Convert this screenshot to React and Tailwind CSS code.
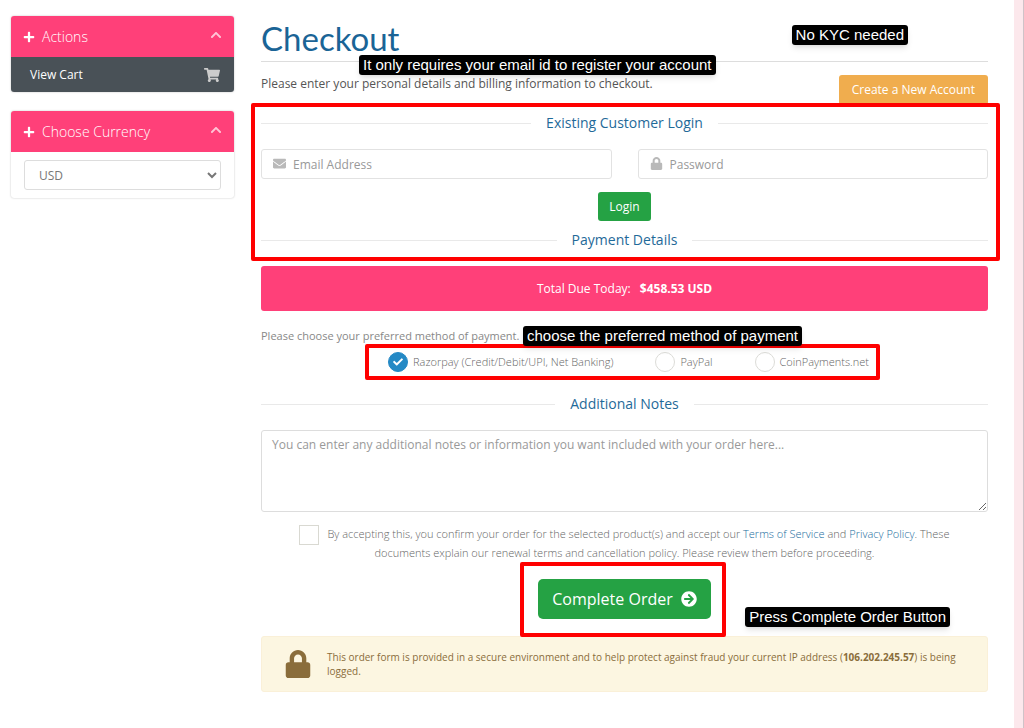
import React, { useState } from 'react';
import {
  FaArrowCircleRight,
  FaCheck,
  FaChevronUp,
  FaEnvelope,
  FaLock,
  FaPlus,
  FaShoppingCart
} from 'react-icons/fa';

const paymentMethods = [
  { id: 'razorpay', label: 'Razorpay (Credit/Debit/UPI, Net Banking)' },
  { id: 'paypal', label: 'PayPal' },
  { id: 'coinpayments', label: 'CoinPayments.net' }
];

function Callout({ className, children }) {
  return (
    <span className={`absolute z-20 whitespace-nowrap rounded-[3px] bg-black px-1 font-['Liberation_Sans',Arial,sans-serif] text-[15px] leading-5 text-white shadow-md ${className}`}>
      {children}
    </span>
  );
}

function Highlight({ className }) {
  return <div aria-hidden="true" className={`pointer-events-none absolute z-10 rounded-[2px] border-4 border-[#ff0000] ${className}`} />;
}

function SectionTitle({ children }) {
  return (
    <div className="flex items-center gap-[15px]">
      <div className="h-px flex-1 bg-[#e9e9e9]" />
      <h2 className="text-[14px] leading-5 text-[#1f6a99]">{children}</h2>
      <div className="h-px flex-1 bg-[#e9e9e9]" />
    </div>
  );
}

function SidebarPanel({ title, children }) {
  return (
    <section className="overflow-hidden rounded-[3px] shadow-[0_0_2px_rgba(0,0,0,0.25)]">
      <button type="button" className="flex h-[41px] w-full items-center bg-[#ff4079] px-3 text-[14px] font-light text-white">
        <FaPlus size={12} />
        <span className="ml-[7px]">{title}</span>
        <FaChevronUp size={12} className="mb-1 ml-auto text-[#ffc4d6]" />
      </button>
      {children}
    </section>
  );
}

function IconInput({ icon: Icon, label, type, id }) {
  return (
    <div className="relative">
      <label htmlFor={id} className="absolute left-3 top-2 text-[#b9b9b9]">
        <Icon size={13} />
      </label>
      <input
        id={id}
        type={type}
        aria-label={label}
        placeholder={label}
        className="block h-[30px] w-full rounded-[3px] border border-[#e2e2e2] pl-[31px] pr-3 text-[12px] outline-none placeholder:text-[#999999]"
      />
    </div>
  );
}

export default function App() {
  const [method, setMethod] = useState('razorpay');
  const [accepted, setAccepted] = useState(false);

  return (
    <div className="min-h-screen border-r border-[#cfc3c8] bg-[#fce8ec] pr-[9px] font-['Open_Sans','Noto_Sans',sans-serif] text-[12px] text-[#555555]">
      <div className="flex min-h-screen items-start gap-[27px] bg-white pb-9 pl-[11px] pr-[26px] pt-4">
        <aside className="flex w-[223px] shrink-0 flex-col gap-[19px]">
          <SidebarPanel title="Actions">
            <a href="#cart" className="flex h-[35px] items-center justify-between bg-[#495157] pl-[19px] pr-3.5 text-[12px] text-white">
              View Cart
              <FaShoppingCart size={16} className="text-[#cccccc]" />
            </a>
          </SidebarPanel>
          <SidebarPanel title="Choose Currency">
            <div className="px-[13px] py-2">
              <select
                aria-label="Choose Currency"
                defaultValue="USD"
                className="block h-[30px] w-full rounded-[3px] border border-[#dddddd] bg-white pl-2.5 text-[12px] text-[#777777]"
              >
                <option>USD</option>
              </select>
            </div>
          </SidebarPanel>
        </aside>

        <main className="min-w-0 flex-1">
          <header className="relative border-b border-[#dddddd]">
            <h1 className="h-[45px] font-['Lato',sans-serif] text-[33px] leading-[44px] text-[#1a6496]">Checkout</h1>
            <Callout className="right-20 top-[9px]">No KYC needed</Callout>
            <Callout className="left-[98px] top-[39px]">It only requires your email id to register your account</Callout>
          </header>

          <div className="flex items-start justify-between pt-[13px]">
            <p className="-mt-px text-[12px] leading-5 text-[#555555]">
              Please enter your personal details and billing information to checkout.
            </p>
            <button type="button" className="h-[30px] rounded-[3px] bg-[#f0ad4e] px-[13px] text-[12px] text-white">
              Create a New Account
            </button>
          </div>

          <section className="relative pb-4 pt-2">
            <Highlight className="-left-2.5 -right-3 -top-0.5 bottom-[5px]" />
            <SectionTitle>Existing Customer Login</SectionTitle>
            <div className="mt-4 grid grid-cols-2 gap-[26px]">
              <IconInput id="email" type="email" label="Email Address" icon={FaEnvelope} />
              <IconInput id="password" type="password" label="Password" icon={FaLock} />
            </div>
            <div className="mb-[9px] mt-[13px] text-center">
              <button type="button" className="h-[29px] rounded-[3px] bg-[#25a244] px-[11px] text-[12px] text-white">Login</button>
            </div>
            <SectionTitle>Payment Details</SectionTitle>
          </section>

          <div className="rounded-[3px] bg-[#ff4079] py-3 text-center text-[12px] leading-[21px] text-white">
            Total Due Today: <strong className="ml-1.5">$458.53 USD</strong>
          </div>

          <section className="relative mt-[15px]">
            <Callout className="left-[262px] top-0">choose the preferred method of payment</Callout>
            <p className="text-[11px] leading-5 text-[#888888]">Please choose your preferred method of payment.</p>
            <div className="mt-1.5 flex justify-center pl-2">
              <div className="relative flex gap-[42px]">
                <Highlight className="-bottom-2 -left-[23px] -right-[11px] -top-2" />
                {paymentMethods.map(item => (
                  <label key={item.id} className="flex h-5 items-center gap-[5px] text-[11px] font-light text-[#666666]">
                    <span className="relative flex size-5 items-center justify-center">
                      <input
                        type="radio"
                        name="method"
                        checked={method === item.id}
                        onChange={() => setMethod(item.id)}
                        className="size-5 appearance-none rounded-full border border-[#dcdcd8] checked:border-[#2489c5] checked:bg-[#2489c5]"
                      />
                      {method === item.id && <FaCheck size={10} className="pointer-events-none absolute text-white" />}
                    </span>
                    {item.label}
                  </label>
                ))}
              </div>
            </div>
          </section>

          <section className="mt-[22px]">
            <SectionTitle>Additional Notes</SectionTitle>
            <textarea
              aria-label="Additional Notes"
              placeholder="You can enter any additional notes or information you want included with your order here..."
              className="mt-4 block h-[82px] w-full rounded-[3px] border border-[#dddddd] px-2.5 py-1 text-[12px] leading-5 outline-none placeholder:text-[#999999]"
            />
          </section>

          <div className="mt-3 px-5 text-center text-[11px] font-light leading-[19px] text-[#666666]">
            <input
              id="accept"
              type="checkbox"
              checked={accepted}
              onChange={e => setAccepted(e.target.checked)}
              className="-my-1 mr-2 size-5 appearance-none border border-[#d9d9d2] align-middle checked:bg-[#2489c5]"
            />
            <label htmlFor="accept">
              By accepting this, you confirm your order for the selected product(s) and accept our{' '}
              <a href="#terms" className="text-[#1a6d9e]">Terms of Service</a> and{' '}
              <a href="#privacy" className="text-[#1a6d9e]">Privacy Policy</a>. These documents explain our renewal
              terms and cancellation policy. Please review them before proceeding.
            </label>
          </div>

          <div className="relative mx-auto mt-[17px] w-fit">
            <Highlight className="-bottom-[18px] -left-[18px] -right-[15px] -top-[17px]" />
            <button type="button" className="flex h-10 items-center gap-2 rounded-[5px] bg-[#25a244] px-3.5 text-[16px] text-white">
              Complete Order
              <FaArrowCircleRight size={16} />
            </button>
            <Callout className="left-[207px] top-7">Press Complete Order Button</Callout>
          </div>

          <div className="mt-[17px] flex items-center gap-[15px] rounded-[3px] border border-[#faf0d8] bg-[#fcf6e1] py-[13px] pl-[22px] pr-5 text-[#8a6d3b]">
            <FaLock size={28} className="shrink-0" />
            <p className="text-[10px] leading-[14px]">
              This order form is provided in a secure environment and to help protect against fraud your current IP address
              (<strong>106.202.245.57</strong>) is being logged.
            </p>
          </div>
        </main>
      </div>
    </div>
  );
}
